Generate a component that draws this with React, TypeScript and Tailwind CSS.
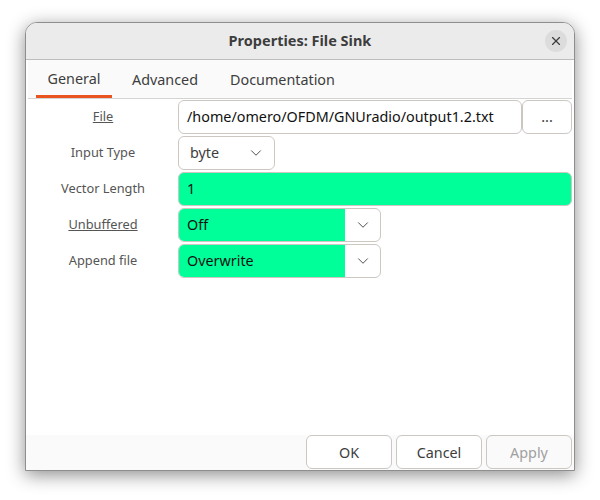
import { ChevronDown, X } from "lucide-react";

const font = "font-['Noto_Sans','Open_Sans',sans-serif]";

function Chevron() {
  return <ChevronDown size={18} strokeWidth={1.2} className="text-[#3d3d3d]" />;
}

function Label({ text, underline }: { text: string; underline?: boolean }) {
  return (
    <div className="flex h-[34px] w-[150px] shrink-0 items-center justify-center text-[12.8px] text-[#555]">
      <span className={underline ? "underline" : ""}>{text}</span>
    </div>
  );
}

function GreenCombo({ value }: { value: string }) {
  return (
    <div className="flex h-[34px] w-[203px] overflow-hidden rounded-[6px] border border-[#cdc7c2] bg-white">
      <div className="flex w-[166px] items-center bg-[#00ff99] pl-2 text-[14.35px] text-[#111]">{value}</div>
      <div className="flex flex-1 items-center justify-center">
        <Chevron />
      </div>
    </div>
  );
}

function FooterButton({ text, disabled }: { text: string; disabled?: boolean }) {
  return (
    <button
      className={`flex h-[34px] w-[86px] items-center justify-center rounded-[6px] border border-[#cdc7c2] pt-[1px] text-[14.35px] ${
        disabled ? "bg-[#fafafa] text-[#a0a0a0]" : "bg-white text-[#3d3d3d]"
      }`}
    >
      {text}
    </button>
  );
}

export default function App() {
  return (
    <div className={`h-[500px] w-[600px] bg-white pl-[25px] pt-[22px] ${font}`}>
      <div className="flex h-[449px] w-[550px] flex-col overflow-hidden rounded-t-[12px] border border-[#8e8e8e] bg-white shadow-[0_4px_18px_rgba(0,0,0,0.45)]">
        {/* Title bar */}
        <div className="relative flex h-[37px] shrink-0 items-center justify-center border-b border-[#bdbdbd] bg-[#ebebeb]">
          <span className="text-[14.5px] font-bold text-[#3d3d3d]">Properties: File Sink</span>
          <div className="absolute right-[7px] top-[7px] flex h-[22px] w-[22px] items-center justify-center rounded-full bg-[#dcdcdc]">
            <X size={14} strokeWidth={2} className="text-[#3d3d3d]" />
          </div>
        </div>

        {/* Tabs */}
        <div className="mx-[2px] flex h-[39px] shrink-0 gap-[12px] border-b border-[#d4d4d4] bg-[#fafafa] pl-[8px]">
          <div className="flex h-[38px] w-[76px] items-center justify-center border-b-[3px] border-[#e95420] pt-[3px] text-[14.35px] text-[#3d3d3d]">
            General
          </div>
          <div className="flex h-[38px] w-[82px] items-center justify-center pt-[1px] text-[14.35px] text-[#3d3d3d]">
            Advanced
          </div>
          <div className="ml-[4px] flex h-[38px] items-center px-[8px] pt-[1px] text-[14.35px] text-[#3d3d3d]">
            Documentation
          </div>
        </div>

        {/* Form */}
        <div className="flex flex-1 flex-col gap-[2px] px-[2px] pt-[1px]">
          <div className="flex">
            <Label text="File" underline />
            <div className="flex h-[34px] w-[344px] items-center rounded-[6px] border border-[#cdc7c2] bg-white pl-2 text-[14.35px] text-[#111]">
              /home/omero/OFDM/GNUradio/output1.2.txt
            </div>
            <button className="flex h-[34px] w-[50px] items-center justify-center rounded-[6px] border border-[#cdc7c2] bg-white text-[14.35px] text-[#3d3d3d]">
              ...
            </button>
          </div>
          <div className="flex">
            <Label text="Input Type" />
            <div className="flex h-[34px] w-[97px] items-center justify-between rounded-[6px] border border-[#cdc7c2] bg-white pl-[11px] pr-[9px] text-[14.35px] text-[#3d3d3d]">
              byte
              <Chevron />
            </div>
          </div>
          <div className="flex">
            <Label text="Vector Length" />
            <div className="flex h-[34px] w-[394px] items-center rounded-[6px] border border-[#cdc7c2] bg-[#00ff99] pl-2 text-[14.35px] text-[#111]">
              1
            </div>
          </div>
          <div className="flex">
            <Label text="Unbuffered" underline />
            <GreenCombo value="Off" />
          </div>
          <div className="flex">
            <Label text="Append file" />
            <GreenCombo value="Overwrite" />
          </div>
        </div>

        {/* Footer */}
        <div className="flex h-[35px] shrink-0 items-start justify-end gap-[4px] bg-[#fafafa] pr-[2px]">
          <FooterButton text="OK" />
          <FooterButton text="Cancel" />
          <FooterButton text="Apply" disabled />
        </div>
      </div>
    </div>
  );
}
